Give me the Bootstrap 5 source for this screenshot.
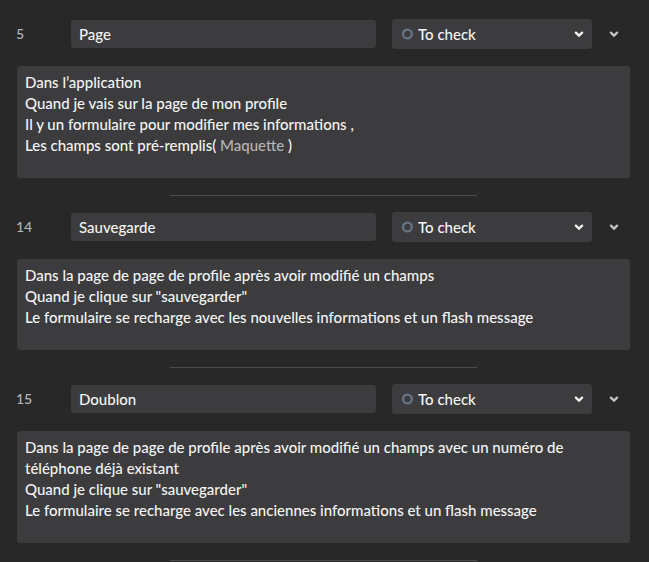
<!DOCTYPE html>
<html lang="fr" data-bs-theme="dark">
<head>
<meta charset="utf-8">
<meta name="viewport" content="width=device-width, initial-scale=1">
<title>Scenarios</title>
<link href="https://cdn.jsdelivr.net/npm/bootstrap@5.3.0/dist/css/bootstrap.min.css" rel="stylesheet">
<style>
  body { background: #282828; color: #f4f4f4; font-family: Lato, "Liberation Sans", sans-serif; font-size: 15px; font-weight: 500; line-height: 21px; }
  .scenario-list { padding: 19px 19px 0 17px; }
  .scenario-head { gap: 16px; margin-bottom: 17px; }
  .scenario-id { width: 39px; margin-left: -1px; padding-bottom: 2px; color: #b5b5b5; font-size: 14px; }
  .title-field, .status-field, .description { background-color: #3c3c3e; color: #f4f4f4; border: 0; border-radius: 3px; }
  .title-field { height: 28px; padding: 0 8px; font: inherit; }
  .status-wrap { width: 200px; }
  .status-field { height: 30px; padding: 0 26px; font: inherit; background-image: none; }
  .title-field:focus, .status-field:focus { background-color: #444446; color: #fff; }
  .status-wrap svg { pointer-events: none; }
  .status-ring { left: 9px; }
  .status-arrow { right: 8px; }
  .toggle { width: 12px; height: 30px; margin-right: 10px; color: #c4c4c4; }
  .description { padding: 6px 8px 22px; }
  .description a { color: #b5b5b8; }
  .separator { width: 50%; height: 1px; margin: 17px auto 16px; border: 0; background: #4b4b4c; opacity: 1; }
</style>
</head>
<body>
<svg class="d-none" aria-hidden="true">
  <symbol id="arrow" viewBox="0 0 10 8"><path d="M1.9 2.6 5 5.6 8.1 2.6" fill="none" stroke="currentColor" stroke-width="2.3" stroke-linecap="round"/></symbol>
  <symbol id="ring" viewBox="0 0 12 12"><circle cx="6.4" cy="6" r="4.4" fill="none" stroke="#657382" stroke-width="2.4"/></symbol>
</svg>
<main class="scenario-list">
  <section>
    <div class="scenario-head d-flex align-items-center">
      <label class="scenario-id flex-shrink-0" for="title-5">5</label>
      <input class="form-control title-field flex-fill" id="title-5" type="text" value="Page">
      <div class="status-wrap position-relative d-flex align-items-center flex-shrink-0">
        <svg class="status-ring position-absolute" width="12" height="12"><use href="#ring"/></svg>
        <select class="form-select status-field" aria-label="Status 5"><option>To check</option></select>
        <svg class="status-arrow position-absolute" width="10" height="8"><use href="#arrow"/></svg>
      </div>
      <button class="toggle btn p-0 border-0 d-flex align-items-center justify-content-center flex-shrink-0" type="button" aria-label="Collapse 5"><svg width="10" height="8"><use href="#arrow"/></svg></button>
    </div>
    <div class="description" contenteditable="true" role="textbox" aria-multiline="true" aria-label="Description 5">
      <div>Dans l’application</div>
      <div>Quand je vais sur la page de mon profile</div>
      <div>Il y un formulaire pour modifier mes informations ,</div>
      <div>Les champs sont pré-remplis( <a class="text-decoration-none" href="#">Maquette</a> )</div>
    </div>
  </section>
  <hr class="separator">
  <section>
    <div class="scenario-head d-flex align-items-center">
      <label class="scenario-id flex-shrink-0" for="title-14">14</label>
      <input class="form-control title-field flex-fill" id="title-14" type="text" value="Sauvegarde">
      <div class="status-wrap position-relative d-flex align-items-center flex-shrink-0">
        <svg class="status-ring position-absolute" width="12" height="12"><use href="#ring"/></svg>
        <select class="form-select status-field" aria-label="Status 14"><option>To check</option></select>
        <svg class="status-arrow position-absolute" width="10" height="8"><use href="#arrow"/></svg>
      </div>
      <button class="toggle btn p-0 border-0 d-flex align-items-center justify-content-center flex-shrink-0" type="button" aria-label="Collapse 14"><svg width="10" height="8"><use href="#arrow"/></svg></button>
    </div>
    <div class="description" contenteditable="true" role="textbox" aria-multiline="true" aria-label="Description 14">
      <div>Dans la page de page de profile après avoir modifié un champs</div>
      <div>Quand je clique sur "sauvegarder"</div>
      <div>Le formulaire se recharge avec les nouvelles informations et un flash message</div>
    </div>
  </section>
  <hr class="separator">
  <section>
    <div class="scenario-head d-flex align-items-center">
      <label class="scenario-id flex-shrink-0" for="title-15">15</label>
      <input class="form-control title-field flex-fill" id="title-15" type="text" value="Doublon">
      <div class="status-wrap position-relative d-flex align-items-center flex-shrink-0">
        <svg class="status-ring position-absolute" width="12" height="12"><use href="#ring"/></svg>
        <select class="form-select status-field" aria-label="Status 15"><option>To check</option></select>
        <svg class="status-arrow position-absolute" width="10" height="8"><use href="#arrow"/></svg>
      </div>
      <button class="toggle btn p-0 border-0 d-flex align-items-center justify-content-center flex-shrink-0" type="button" aria-label="Collapse 15"><svg width="10" height="8"><use href="#arrow"/></svg></button>
    </div>
    <div class="description" contenteditable="true" role="textbox" aria-multiline="true" aria-label="Description 15">
      <div>Dans la page de page de profile après avoir modifié un champs avec un numéro de téléphone déjà existant</div>
      <div>Quand je clique sur "sauvegarder"</div>
      <div>Le formulaire se recharge avec les anciennes informations et un flash message</div>
    </div>
  </section>
  <hr class="separator mb-0">
</main>
<script src="https://cdn.jsdelivr.net/npm/bootstrap@5.3.0/dist/js/bootstrap.bundle.min.js"></script>
</body>
</html>
